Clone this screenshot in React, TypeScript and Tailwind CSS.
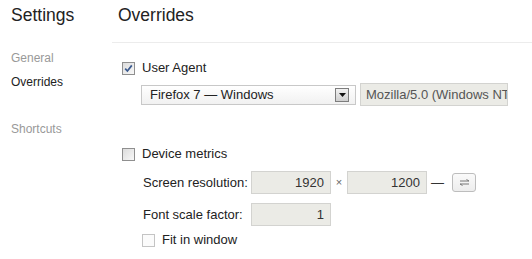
import React from "react";

function CheckBox({ checked, dim }: { checked?: boolean; dim?: boolean }) {
  return (
    <span
      className={
        "flex h-[13px] w-[13px] shrink-0 items-center justify-center border " +
        (dim
          ? "border-[#c4c4c4] bg-[#fbfbfb]"
          : "border-[#8f8f8f] bg-gradient-to-br from-[#dcdcdc] to-[#f8f8f8]")
      }
    >
      {checked ? (
        <svg width="9" height="9" viewBox="0 0 9 9">
          <path d="M1.2 4.6 L3.4 7 L7.8 1.4" fill="none" stroke="#3b5a8e" strokeWidth="1.7" />
        </svg>
      ) : null}
    </span>
  );
}

function NumberField({ value, wide }: { value: string; wide?: boolean }) {
  return (
    <div
      className={
        "flex h-[23px] items-center justify-end border border-[#d3d3d0] bg-[#ebebe6] px-[6px] text-[13px] text-[#333] " +
        (wide ? "w-[148px]" : "w-[80px]")
      }
    >
      {value}
    </div>
  );
}

export default function App() {
  return (
    <div className="flex h-[259px] w-[532px] bg-white font-['Liberation_Sans',Arial,sans-serif] text-[#222]">
      <aside className="w-[112px] shrink-0 pl-[11px]">
        <div className="h-[43px] pt-[4px] text-[17.5px] leading-[22px] text-[#222]">Settings</div>
        <ul className="mt-[3px] text-[12px] leading-[24px]">
          <li className="text-[#999]">General</li>
          <li className="text-[#222]">Overrides</li>
          <li className="mt-[23px] text-[#999]">Shortcuts</li>
        </ul>
      </aside>

      <main className="flex-1">
        <div className="h-[43px] border-b border-[#ececec] pl-[6px] pt-[4px] text-[17.5px] leading-[22px] text-[#222]">
          Overrides
        </div>

        <div className="pl-[10px] text-[13px] text-[#222]">
          <div className="mt-[15px] flex h-[20px] items-center gap-[7px]">
            <CheckBox checked />
            <span>User Agent</span>
          </div>

          <div className="ml-[19px] mt-[5px] flex items-center gap-[4px]">
            <div className="flex h-[20px] w-[215px] items-center justify-between border border-[#c8c8c8] bg-gradient-to-b from-white to-[#f1f1f1] pl-[8px] pr-[6px]">
              <span>Firefox 7 — Windows</span>
              <span className="flex h-[14px] w-[14px] items-center justify-center border border-[#7d7d7d] bg-gradient-to-b from-[#f2f2f2] to-[#cfcfcf]">
                <svg width="7" height="4" viewBox="0 0 7 4">
                  <path d="M0 0 H7 L3.5 4 Z" fill="#111" />
                </svg>
              </span>
            </div>
            <div className="flex h-[23px] w-[148px] items-center overflow-hidden whitespace-nowrap border border-[#d3d3d0] bg-[#ebebe6] pl-[5px] text-[#555]">
              Mozilla/5.0 (Windows NT 6.1; WOW64)
            </div>
          </div>

          <div className="mt-[38px] flex h-[20px] items-center gap-[7px]">
            <CheckBox />
            <span>Device metrics</span>
          </div>

          <div className="ml-[21px] mt-[7px] flex items-center">
            <span className="w-[108px]">Screen resolution:</span>
            <NumberField value="1920" />
            <span className="w-[16px] text-center text-[11px] text-[#666]">×</span>
            <NumberField value="1200" />
            <span className="ml-[4px] text-[#333]">—</span>
            <button className="ml-[8px] flex h-[19px] w-[24px] items-center justify-center rounded-[3px] border border-[#bdbdbd] bg-gradient-to-b from-[#fafafa] to-[#ededed]">
              <svg width="11" height="7" viewBox="0 0 11 7">
                <path d="M1 2 H10 M7.5 0.5 L10 2 M10 5 H1 M3.5 6.5 L1 5" fill="none" stroke="#777" strokeWidth="1" />
              </svg>
            </button>
          </div>

          <div className="ml-[21px] mt-[9px] flex items-center">
            <span className="w-[108px]">Font scale factor:</span>
            <NumberField value="1" />
          </div>

          <div className="ml-[20px] mt-[6px] flex h-[16px] items-center gap-[7px]">
            <CheckBox dim />
            <span>Fit in window</span>
          </div>
        </div>
      </main>
    </div>
  );
}
